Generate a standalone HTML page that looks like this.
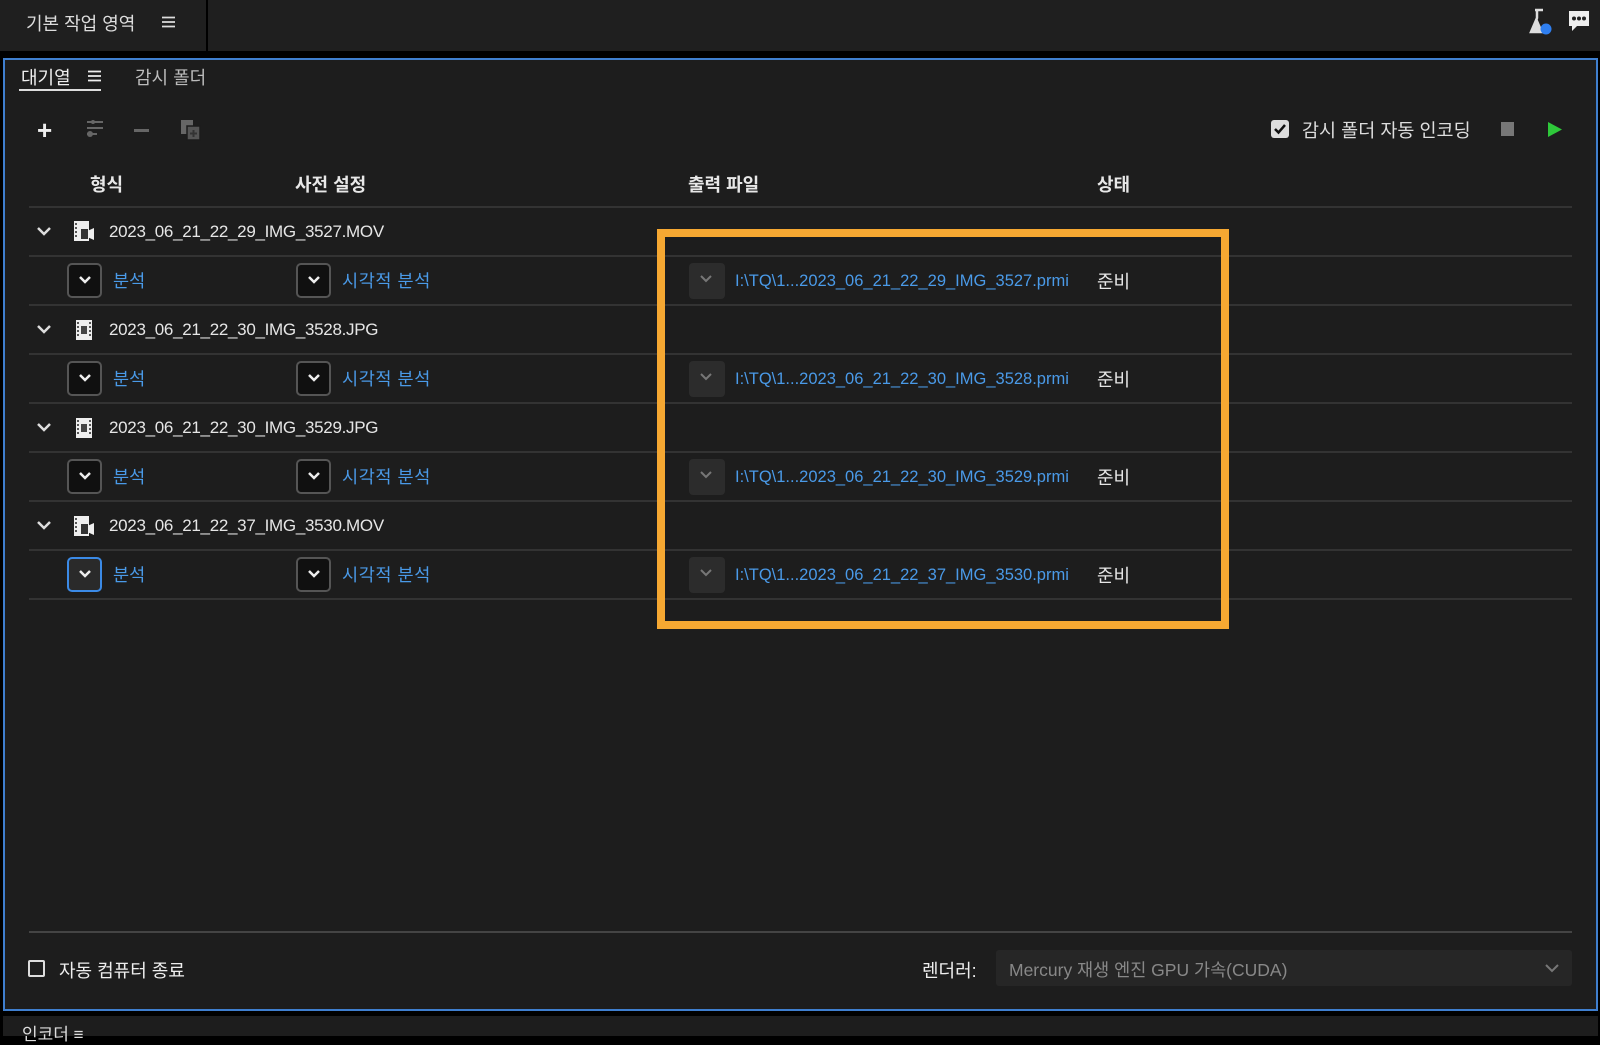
<!DOCTYPE html>
<html><head><meta charset="utf-8">
<style>
*{margin:0;padding:0;box-sizing:border-box}
body{width:1600px;height:1033px;background:#000;font-family:"Liberation Sans","Noto Sans CJK KR",sans-serif;color:#e6e6e6;position:relative;overflow:hidden;font-size:17px}
.a{position:absolute;white-space:nowrap}
.top{left:0;top:0;width:1600px;height:51px;background:#1f1f1f}
.panel{left:3px;top:58px;width:1595px;height:953px;background:#1d1d1d;border:2px solid #3f7fcf}
.line{position:absolute;height:2px;background:#333;left:29px;width:1543px}
.blue{color:#4a9ae8}
.dd{position:absolute;width:35px;height:35px;border:2px solid #555;border-radius:5px;background:#101010}
.dd svg{position:absolute;left:9px;top:10px}
.gd{position:absolute;width:36px;height:36px;border-radius:4px;background:#2c2c2c}
.gd svg{position:absolute;left:10px;top:11px}
.hd{font-weight:bold;font-size:18px;color:#e8e8e8}
.fn{letter-spacing:-0.3px}
.lk{font-size:16.5px;letter-spacing:0px}
</style></head><body>
<div class="a top"></div>
<div class="a" style="left:206px;top:0;width:2px;height:51px;background:#000"></div>
<div class="a" style="left:26px;top:10px;font-size:18px;color:#ddd">기본 작업 영역</div>
<svg class="a" style="left:162px;top:16px" width="13" height="12"><path d="M0 1.5h13M0 6h13M0 10.5h13" stroke="#ddd" stroke-width="1.8"/></svg>
<svg class="a" style="left:1528px;top:8px" width="26" height="28" viewBox="0 0 26 28"><path d="M7 2h8M9 2v8L3 24h14" stroke="#ddd" stroke-width="2.5" fill="none"/><path d="M9 10L3 24h12z" fill="#ddd"/><circle cx="18" cy="21" r="5.5" fill="#2f7ff0"/></svg>
<svg class="a" style="left:1567px;top:9px" width="24" height="26" viewBox="0 0 24 26"><path d="M2 2h20v15H10l-5 5v-5H2z" fill="#eee"/><circle cx="7" cy="9.5" r="2" fill="#222"/><circle cx="12" cy="9.5" r="2" fill="#222"/><circle cx="17" cy="9.5" r="2" fill="#222"/></svg>

<div class="a panel"></div>
<div class="a" style="left:21px;top:64px;font-size:18px;color:#eee">대기열</div>
<svg class="a" style="left:88px;top:70px" width="13" height="12"><path d="M0 1.5h13M0 6h13M0 10.5h13" stroke="#eee" stroke-width="1.8"/></svg>
<div class="a" style="left:19px;top:89px;width:82px;height:2px;background:#ddd"></div>
<div class="a" style="left:135px;top:64px;font-size:18px;color:#bbb">감시 폴더</div>

<div class="a" style="left:37px;top:115px;font-size:26px;color:#eee;font-weight:bold">+</div>
<svg class="a" style="left:84px;top:119px" width="22" height="20"><g stroke="#666" stroke-width="2"><path d="M3 3h16M3 9h16M3 15h10"/></g><circle cx="9" cy="3" r="2" fill="#666"/><circle cx="6" cy="15" r="3" fill="#666"/></svg>
<div class="a" style="left:134px;top:129px;width:15px;height:3px;background:#666"></div>
<svg class="a" style="left:180px;top:119px" width="22" height="22"><rect x="1" y="1" width="12" height="14" fill="#666"/><rect x="7" y="7" width="13" height="14" fill="#555" stroke="#1d1d1d" stroke-width="1.5"/><path d="M13.5 11v7M10 14.5h7" stroke="#333" stroke-width="2"/></svg>

<div class="a" style="left:1271px;top:120px;width:18px;height:18px;background:#ddd;border-radius:3px"></div>
<svg class="a" style="left:1273px;top:122px" width="14" height="14"><path d="M2 7l3.5 3.5L12 3" stroke="#111" stroke-width="2.5" fill="none"/></svg>
<div class="a" style="left:1302px;top:117px;font-size:18.5px;color:#ddd">감시 폴더 자동 인코딩</div>
<div class="a" style="left:1501px;top:122px;width:13px;height:14px;background:#777"></div>
<svg class="a" style="left:1547px;top:121px" width="16" height="17"><path d="M1 1l14 7.5L1 16z" fill="#2ec83a"/></svg>

<div class="a hd" style="left:90px;top:171px">형식</div>
<div class="a hd" style="left:295px;top:171px">사전 설정</div>
<div class="a hd" style="left:688px;top:171px">출력 파일</div>
<div class="a hd" style="left:1097px;top:171px">상태</div>

<div class="line" style="top:206px"></div>
<div class="line" style="top:255px"></div>
<div class="line" style="top:304px"></div>
<div class="line" style="top:353px"></div>
<div class="line" style="top:402px"></div>
<div class="line" style="top:451px"></div>
<div class="line" style="top:500px"></div>
<div class="line" style="top:549px"></div>
<div class="line" style="top:598px"></div>

<svg class="a" style="left:36px;top:226px" width="16" height="12"><path d="M2 2l6 6 6-6" stroke="#ddd" stroke-width="2.5" fill="none"/></svg>
<svg class="a" style="left:73px;top:220px" width="22" height="22"><rect x="1" y="1" width="15" height="20" fill="#eee"/><path d="M3 3v16" stroke="#555" stroke-dasharray="2 2" stroke-width="2"/><path d="M12 12l9-4v12l-9-4z" fill="#eee"/><rect x="8" y="9" width="7" height="10" fill="#333"/></svg>
<div class="a fn" style="left:109px;top:222px">2023_06_21_22_29_IMG_3527.MOV</div>

<svg class="a" style="left:36px;top:324px" width="16" height="12"><path d="M2 2l6 6 6-6" stroke="#ddd" stroke-width="2.5" fill="none"/></svg>
<svg class="a" style="left:75px;top:319px" width="18" height="22"><rect x="1" y="1" width="16" height="20" fill="#eee"/><path d="M3 3v16M15 3v16" stroke="#555" stroke-dasharray="2 2" stroke-width="2"/><rect x="6" y="7" width="6" height="8" fill="#444"/></svg>
<div class="a fn" style="left:109px;top:320px">2023_06_21_22_30_IMG_3528.JPG</div>

<svg class="a" style="left:36px;top:422px" width="16" height="12"><path d="M2 2l6 6 6-6" stroke="#ddd" stroke-width="2.5" fill="none"/></svg>
<svg class="a" style="left:75px;top:417px" width="18" height="22"><rect x="1" y="1" width="16" height="20" fill="#eee"/><path d="M3 3v16M15 3v16" stroke="#555" stroke-dasharray="2 2" stroke-width="2"/><rect x="6" y="7" width="6" height="8" fill="#444"/></svg>
<div class="a fn" style="left:109px;top:418px">2023_06_21_22_30_IMG_3529.JPG</div>

<svg class="a" style="left:36px;top:520px" width="16" height="12"><path d="M2 2l6 6 6-6" stroke="#ddd" stroke-width="2.5" fill="none"/></svg>
<svg class="a" style="left:73px;top:515px" width="22" height="22"><rect x="1" y="1" width="15" height="20" fill="#eee"/><path d="M3 3v16" stroke="#555" stroke-dasharray="2 2" stroke-width="2"/><path d="M12 12l9-4v12l-9-4z" fill="#eee"/><rect x="8" y="9" width="7" height="10" fill="#333"/></svg>
<div class="a fn" style="left:109px;top:516px">2023_06_21_22_37_IMG_3530.MOV</div>

<div class="dd" style="left:67px;top:263px"><svg width="14" height="10"><path d="M2 2l5 5 5-5" stroke="#eee" stroke-width="2.5" fill="none"/></svg></div>
<div class="a blue" style="left:113px;top:268px;font-size:17.5px">분석</div>
<div class="dd" style="left:296px;top:263px"><svg width="14" height="10"><path d="M2 2l5 5 5-5" stroke="#eee" stroke-width="2.5" fill="none"/></svg></div>
<div class="a blue" style="left:342px;top:268px;font-size:17.5px;letter-spacing:0.6px">시각적 분석</div>
<div class="gd" style="left:689px;top:263px"><svg width="14" height="10"><path d="M2 2l5 5 5-5" stroke="#777" stroke-width="2" fill="none"/></svg></div>
<div class="a blue lk" style="left:735px;top:272px">I:\TQ\1...2023_06_21_22_29_IMG_3527.prmi</div>
<div class="a" style="left:1097px;top:268px;font-size:18px">준비</div>

<div class="dd" style="left:67px;top:361px"><svg width="14" height="10"><path d="M2 2l5 5 5-5" stroke="#eee" stroke-width="2.5" fill="none"/></svg></div>
<div class="a blue" style="left:113px;top:366px;font-size:17.5px">분석</div>
<div class="dd" style="left:296px;top:361px"><svg width="14" height="10"><path d="M2 2l5 5 5-5" stroke="#eee" stroke-width="2.5" fill="none"/></svg></div>
<div class="a blue" style="left:342px;top:366px;font-size:17.5px;letter-spacing:0.6px">시각적 분석</div>
<div class="gd" style="left:689px;top:361px"><svg width="14" height="10"><path d="M2 2l5 5 5-5" stroke="#777" stroke-width="2" fill="none"/></svg></div>
<div class="a blue lk" style="left:735px;top:370px">I:\TQ\1...2023_06_21_22_30_IMG_3528.prmi</div>
<div class="a" style="left:1097px;top:366px;font-size:18px">준비</div>

<div class="dd" style="left:67px;top:459px"><svg width="14" height="10"><path d="M2 2l5 5 5-5" stroke="#eee" stroke-width="2.5" fill="none"/></svg></div>
<div class="a blue" style="left:113px;top:464px;font-size:17.5px">분석</div>
<div class="dd" style="left:296px;top:459px"><svg width="14" height="10"><path d="M2 2l5 5 5-5" stroke="#eee" stroke-width="2.5" fill="none"/></svg></div>
<div class="a blue" style="left:342px;top:464px;font-size:17.5px;letter-spacing:0.6px">시각적 분석</div>
<div class="gd" style="left:689px;top:459px"><svg width="14" height="10"><path d="M2 2l5 5 5-5" stroke="#777" stroke-width="2" fill="none"/></svg></div>
<div class="a blue lk" style="left:735px;top:468px">I:\TQ\1...2023_06_21_22_30_IMG_3529.prmi</div>
<div class="a" style="left:1097px;top:464px;font-size:18px">준비</div>

<div class="dd" style="left:67px;top:557px;border-color:#3b8ae6;background:#2a2a2a"><svg width="14" height="10"><path d="M2 2l5 5 5-5" stroke="#eee" stroke-width="2.5" fill="none"/></svg></div>
<div class="a blue" style="left:113px;top:562px;font-size:17.5px">분석</div>
<div class="dd" style="left:296px;top:557px"><svg width="14" height="10"><path d="M2 2l5 5 5-5" stroke="#eee" stroke-width="2.5" fill="none"/></svg></div>
<div class="a blue" style="left:342px;top:562px;font-size:17.5px;letter-spacing:0.6px">시각적 분석</div>
<div class="gd" style="left:689px;top:557px"><svg width="14" height="10"><path d="M2 2l5 5 5-5" stroke="#777" stroke-width="2" fill="none"/></svg></div>
<div class="a blue lk" style="left:735px;top:566px">I:\TQ\1...2023_06_21_22_37_IMG_3530.prmi</div>
<div class="a" style="left:1097px;top:562px;font-size:18px">준비</div>

<div class="a" style="left:657px;top:229px;width:572px;height:400px;border:8px solid #f6a832"></div>

<div class="a" style="left:29px;top:931px;width:1543px;height:2px;background:#444"></div>
<div class="a" style="left:28px;top:960px;width:17px;height:17px;border:2px solid #ddd;border-radius:2px"></div>
<div class="a" style="left:59px;top:957px;font-size:18px;color:#eee">자동 컴퓨터 종료</div>
<div class="a" style="left:922px;top:957px;font-size:18px;color:#eee">렌더러:</div>
<div class="a" style="left:996px;top:950px;width:576px;height:36px;background:#262626;border-radius:3px"></div>
<div class="a" style="left:1009px;top:957px;font-size:17.5px;color:#888">Mercury 재생 엔진 GPU 가속(CUDA)</div>
<svg class="a" style="left:1544px;top:963px" width="16" height="10"><path d="M2 2l6 6 6-6" stroke="#777" stroke-width="2" fill="none"/></svg>

<div class="a" style="left:3px;top:1016px;width:1595px;height:20px;background:#1d1d1d"></div>
<div class="a" style="left:22px;top:1020px;font-size:17px;color:#ddd">인코더 ≡</div>
</body></html>
